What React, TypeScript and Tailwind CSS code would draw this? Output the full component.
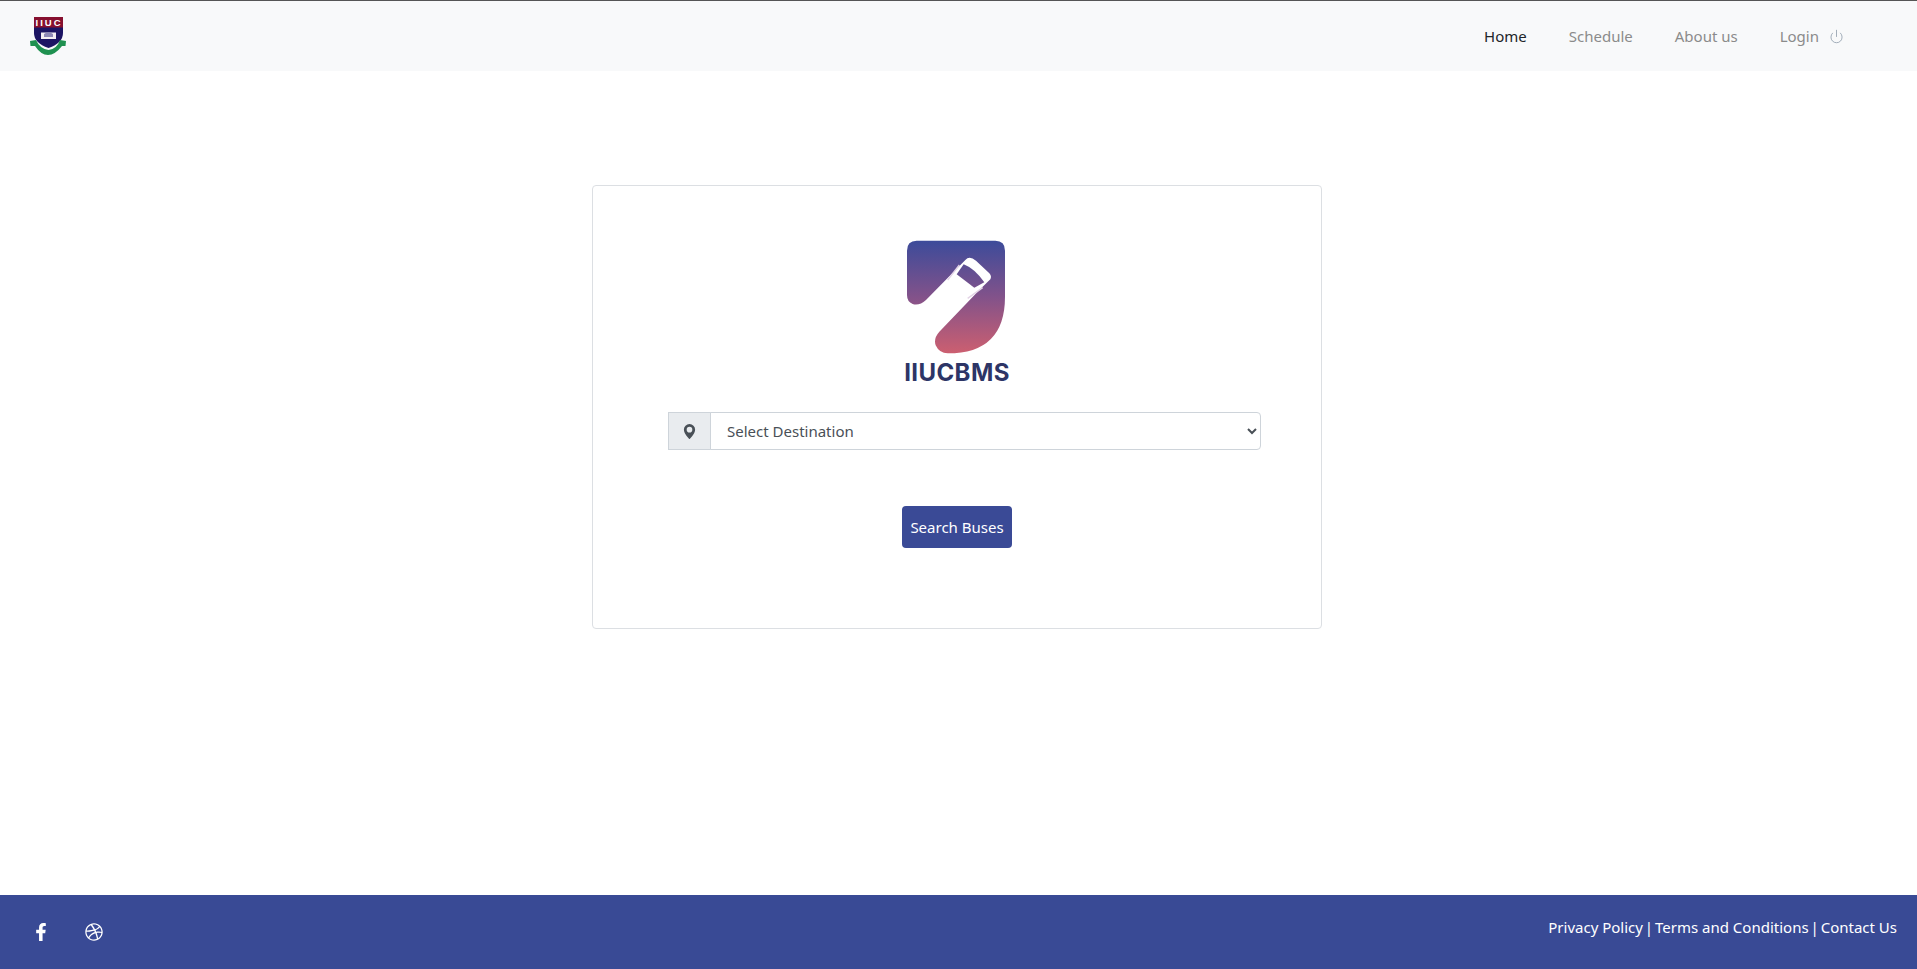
import { Power } from "lucide-react";
import { FaFacebookF, FaDribbble } from "react-icons/fa";
import { BsGeoAltFill } from "react-icons/bs";

function CollegeLogo() {
  return (
    <svg width="38" height="40" viewBox="0 0 38 40" className="block">
      <path d="M5 1 H34 V17 Q34 27 19.5 32 Q5 27 5 17 Z" fill="#1c1463" />
      <rect x="5" y="1" width="29" height="10.5" fill="#86102f" />
      <text x="20" y="9.5" textAnchor="middle" fontSize="9.5" fontWeight="700" fill="#fff" letterSpacing="2" fontFamily="'Liberation Sans', sans-serif">IIUC</text>
      <path d="M12 16.5 H27 V23 H12 Z" fill="#f3eef2" />
      <path d="M15 18 Q19.5 14.5 24 18 V21 H15 Z" fill="#8d88b5" />
      <path d="M1 25 L7 24 Q11 33 19.5 34 Q28 33 31 24 L37 25 L36.5 30 L33 30 Q26 39 19 39 Q12 39 6 30 L1.5 30 Z" fill="#1f9150" />
    </svg>
  );
}

function BusLogo() {
  return (
    <svg width="100" height="114" viewBox="143 60 300 342" className="block">
      <defs>
        <linearGradient id="busGrad" gradientUnits="userSpaceOnUse" x1="0" y1="62" x2="0" y2="400">
          <stop offset="0" stopColor="#3c4b9a" />
          <stop offset="0.5" stopColor="#82528a" />
          <stop offset="1" stopColor="#cc5f70" />
        </linearGradient>
      </defs>
      <path
        d="M172 62 H408 Q437 62 437 92 V230 Q437 400 265 400 Q240 400 229 376 Q222 355 240 335 L360 210 L393 178 Q398 168 390 160 L350 122 Q330 106 318 120 L200 240 Q180 258 160 252 Q143 245 143 225 V92 Q143 62 172 62 Z"
        fill="url(#busGrad)"
      />
      <path d="M313 133 Q345 145 375 187 L345 203 L292 163 Z" fill="url(#busGrad)" />
      <path d="M265 180 L300 135" stroke="#e3d3e6" strokeWidth="4" fill="none" />
      <path d="M325 235 L370 203" stroke="#e3d3e6" strokeWidth="4" fill="none" />
    </svg>
  );
}

export default function App() {
  return (
    <div className="min-h-[969px] flex flex-col bg-white font-['Noto_Sans',sans-serif] text-[15px]">
      <header className="h-[71px] border-t border-[#555] bg-[#f8f9fa] flex items-center justify-between pl-[29px] pr-[73px]">
        <CollegeLogo />
        <nav className="flex items-center gap-[42px] text-[#8b8b8b]">
          <a className="text-[#212529]">Home</a>
          <a>Schedule</a>
          <a>About us</a>
          <a className="flex items-center gap-[10px]">
            Login
            <Power size={15} strokeWidth={1.25} className="text-[#8b99a8]" />
          </a>
        </nav>
      </header>

      <main className="flex-1 flex justify-center items-start pt-[114px]">
        <section className="w-[730px] h-[444px] mr-[3px] border border-[#dcdfe3] rounded-[4px] flex flex-col items-center pt-[54px]">
          <BusLogo />
          <h1 className="mt-[5px] font-['Inter',sans-serif] font-bold text-[24px] tracking-[0.4px] leading-[28px] text-[#2d3566]">IIUCBMS</h1>
          <div className="mt-[25px] ml-[15px] w-[593px] h-[38px] flex">
            <span className="w-[43px] flex items-center justify-center bg-[#e9ecef] border border-[#ced4da] text-[#495057]">
              <BsGeoAltFill size={15} />
            </span>
            <select className="flex-1 -ml-px bg-white border border-[#ced4da] rounded-r-[4px] pl-[12px] pr-[4px] text-[#495057] text-[15px]">
              <option>Select Destination</option>
            </select>
          </div>
          <button className="mt-[56px] w-[110px] h-[42px] rounded-[4px] bg-[#3a4a96] text-white">Search Buses</button>
        </section>
      </main>

      <footer className="h-[74px] bg-[#394a95] flex justify-between pl-[32px] pr-[20px] text-white">
        <div className="flex items-center gap-[35px] text-white">
          <FaFacebookF size={18} />
          <FaDribbble size={18} />
        </div>
        <p className="pt-[21px]">
          Privacy Policy <span className="-mx-[2px]">|</span> Terms and Conditions <span className="-mx-[2px]">|</span> Contact Us
        </p>
      </footer>
    </div>
  );
}
